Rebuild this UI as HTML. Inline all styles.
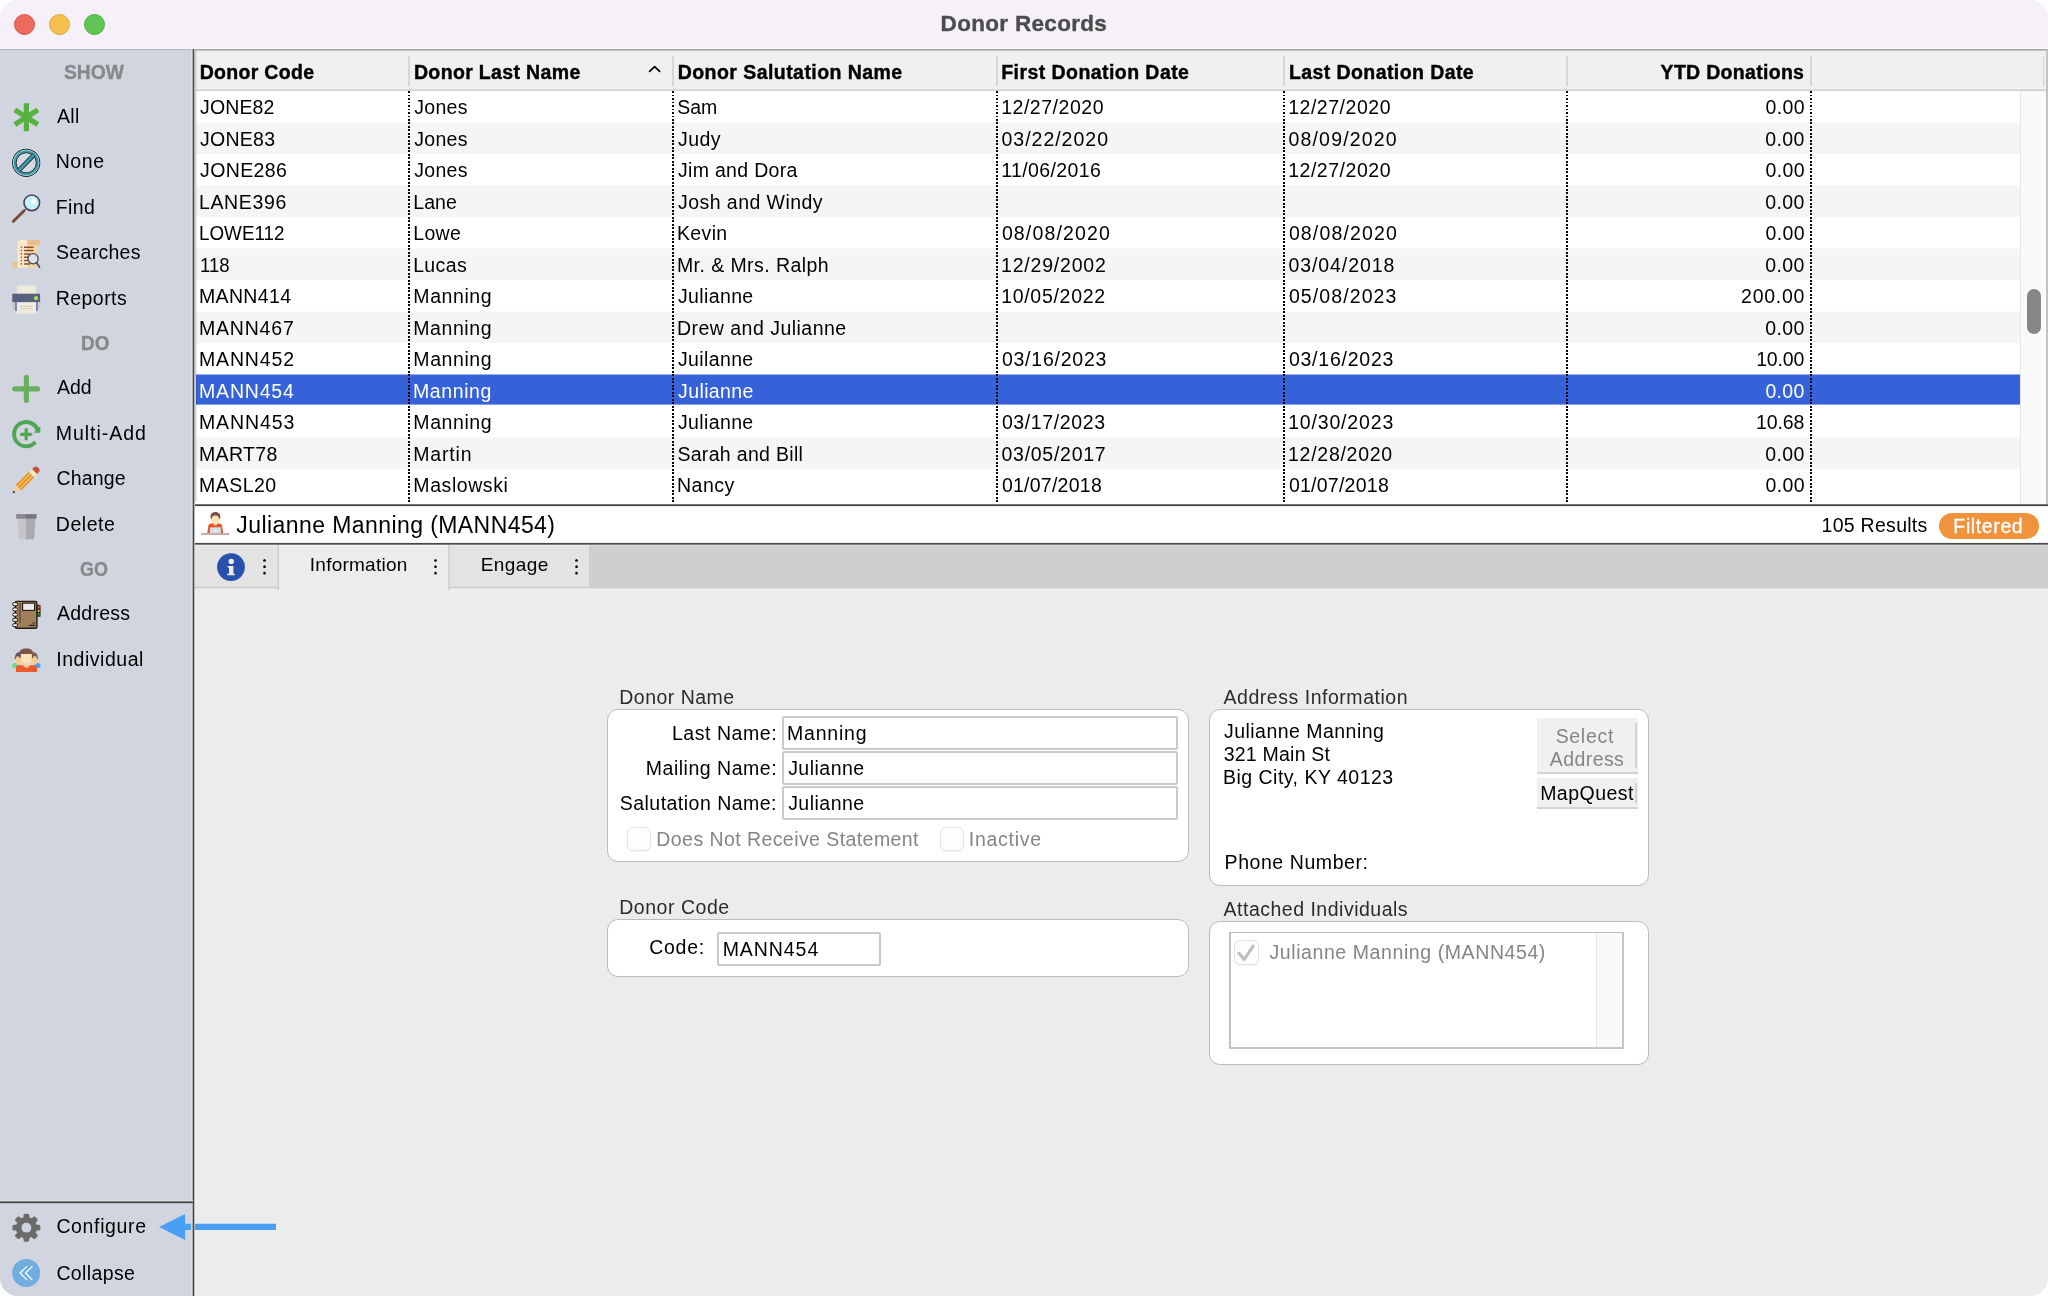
<!DOCTYPE html>
<html lang="en">
<head>
<meta charset="utf-8">
<title>Donor Records</title>
<style>
*{box-sizing:border-box;margin:0;padding:0}
html,body{width:2048px;height:1296px;overflow:hidden;background:#fff}
body{font-family:"Liberation Sans",sans-serif;font-size:19.5px;color:#000;position:relative}
#win{position:absolute;left:0;top:0;width:2048px;height:1296px;border-radius:18px;overflow:hidden;background:#ececec;will-change:transform}
.abs{position:absolute;white-space:nowrap}
/* title bar */
#tbar{position:absolute;left:0;top:0;width:2048px;height:49px;background:#f6f1f8}
#tbar .dot{position:absolute;top:14px;width:21px;height:21px;border-radius:50%}
#ttl{position:absolute;left:940px;top:0;height:49px;line-height:47px;white-space:nowrap;font-weight:bold;font-size:22.5px;color:#4c4c4c;letter-spacing:.25px}
#tline{position:absolute;left:195px;top:48px;width:1853px;height:4px;background:linear-gradient(to bottom,#fbf7fc 0px,#fbf7fc 1px,#a6a6a6 1px,#a6a6a6 2px,#c4c4c4 2px,#c4c4c4 3px,#f4f4f4 3px,#f4f4f4 4px)}
#tline2{position:absolute;left:0;top:48px;width:195px;height:3px;background:linear-gradient(to bottom,#fbf7fc 0px,#fbf7fc 1px,#aab0bc 1px,#aab0bc 2px,#c6cbd6 2px,#c6cbd6 3px)}
/* sidebar */
#side{position:absolute;left:0;top:50px;width:193px;height:1246px;background:#d1d5df}
#sdiv{position:absolute;left:191px;top:49px;width:4px;height:1247px;z-index:5;background:linear-gradient(to right,#d9dde6 0,#d9dde6 1px,#a9acb5 1px,#a9acb5 2px,#484846 2px,#484846 3px,#b8b8b8 3px,#b8b8b8 4px)}
#sdiv2{position:absolute;left:195px;top:589px;width:1px;height:707px;background:#f2f2f2}
#tbl:before{content:"";position:absolute;left:0;top:0;width:2px;height:450px;z-index:4;background:linear-gradient(to right,#cdcdcd 0,#cdcdcd 1px,rgba(0,0,0,.07) 1px,rgba(0,0,0,.07) 2px)}
.sh{position:absolute;left:64px;white-space:nowrap;font-weight:bold;color:#888;font-size:19.5px;height:24px;line-height:24px;letter-spacing:.4px}
.si{position:absolute;left:56px;height:26px;line-height:26px;font-size:19.5px;white-space:nowrap;letter-spacing:.45px}
.ic{position:absolute;left:11px;width:30px;height:30px}
#sline{position:absolute;left:0;top:1200px;width:193px;height:4px;z-index:6;background:linear-gradient(to bottom,#dde1ea 0px,#dde1ea 1px,#7a7b7e 1px,#7a7b7e 2px,#484846 2px,#484846 3px,#b9bcc4 3px,#b9bcc4 4px)}
/* table */
#tbl{position:absolute;left:195px;top:51px;width:1853px;height:453px;background:#fff}
#thead{position:absolute;left:0;top:0;width:1851px;height:38px;background:#f0f0f0}
.th{position:absolute;top:0;height:38px;line-height:42px;font-weight:bold;font-size:19.5px;white-space:nowrap;letter-spacing:.3px}
.hs{position:absolute;top:5px;width:2px;height:30px;background:#d6d6d6}
.sort{position:absolute;left:452px;top:14px}
#hline{position:absolute;left:0;top:37px;width:1851px;height:3px;background:linear-gradient(to bottom,#f2f2f2 0px,#f2f2f2 1px,#dcdcdc 1px,#dcdcdc 2px,#d0d0d0 2px,#d0d0d0 3px)}
#rows{position:absolute;left:0;top:40px;width:1825px;height:413px;background:#fff}
#tbl{z-index:2}#tbot{z-index:1}
.bg{position:absolute;left:0;width:1825px}
.row{position:absolute;left:0;width:1825px;height:32px;line-height:32px}
.row.sel{color:#fff}
.td{position:absolute;top:0;white-space:nowrap;font-size:19.5px;letter-spacing:.45px}
.r{text-align:right}
.vs{position:absolute;top:0;width:2px;height:412px;z-index:3;background:repeating-linear-gradient(to bottom,#000 0,#000 1.75px,transparent 1.75px,transparent 3.5px)}
#strack{position:absolute;left:1825px;top:40px;width:26px;height:413px;background:#fafafa;border-left:1px solid #e7e7e7}
#sthumb{position:absolute;left:6px;top:198px;width:14px;height:45px;border-radius:7px;background:#868686}
#tbl:after{content:"";position:absolute;left:1851px;top:0;width:2px;height:453px;background:#c2c2c2}
/* detail */
#dstrip{position:absolute;left:195px;top:506px;width:1853px;height:37px;background:#fff}
#dname{left:41px;top:0;height:37px;line-height:38px;font-size:23px;letter-spacing:.42px}
#dres{right:121px;top:0;height:37px;line-height:39px;font-size:19.5px;letter-spacing:.45px}
#dpill{left:1744px;top:7px;width:100px;height:26px;border-radius:13px;background:#f0933c}
#dpilltxt{left:15px;top:0;height:26px;line-height:26px;color:#fff;font-size:19.5px;letter-spacing:.5px}
#dline{position:absolute;left:195px;top:542px;width:1853px;height:3px;background:linear-gradient(to bottom,#f2f2f2 0px,#f2f2f2 1px,#484848 1px,#484848 2px,#7e7e7e 2px,#7e7e7e 3px)}
#tabs{position:absolute;left:195px;top:545px;width:1853px;height:45px;background:linear-gradient(to bottom,#dbdbdb 0px,#dbdbdb 1px,#cfcfcf 1px,#cfcfcf 2px,#cfcfcf 2px,#cfcfcf 3px,#cfcfcf 3px,#cfcfcf 4px,#cfcfcf 4px,#cfcfcf 5px,#cfcfcf 5px,#cfcfcf 6px,#cfcfcf 6px,#cfcfcf 7px,#cfcfcf 7px,#cfcfcf 8px,#cfcfcf 8px,#cfcfcf 9px,#cfcfcf 9px,#cfcfcf 10px,#cfcfcf 10px,#cfcfcf 11px,#cfcfcf 11px,#cfcfcf 12px,#cfcfcf 12px,#cfcfcf 13px,#cfcfcf 13px,#cfcfcf 14px,#cfcfcf 14px,#cfcfcf 15px,#cfcfcf 15px,#cfcfcf 16px,#cfcfcf 16px,#cfcfcf 17px,#cfcfcf 17px,#cfcfcf 18px,#cfcfcf 18px,#cfcfcf 19px,#cfcfcf 19px,#cfcfcf 20px,#cfcfcf 20px,#cfcfcf 21px,#cfcfcf 21px,#cfcfcf 22px,#cfcfcf 22px,#cfcfcf 23px,#cfcfcf 23px,#cfcfcf 24px,#cfcfcf 24px,#cfcfcf 25px,#cfcfcf 25px,#cfcfcf 26px,#cfcfcf 26px,#cfcfcf 27px,#cfcfcf 27px,#cfcfcf 28px,#cfcfcf 28px,#cfcfcf 29px,#cfcfcf 29px,#cfcfcf 30px,#cfcfcf 30px,#cfcfcf 31px,#cfcfcf 31px,#cfcfcf 32px,#cfcfcf 32px,#cfcfcf 33px,#cfcfcf 33px,#cfcfcf 34px,#cfcfcf 34px,#cfcfcf 35px,#cfcfcf 35px,#cfcfcf 36px,#cfcfcf 36px,#cfcfcf 37px,#cfcfcf 37px,#cfcfcf 38px,#cfcfcf 38px,#cfcfcf 39px,#cfcfcf 39px,#cfcfcf 40px,#cfcfcf 40px,#cfcfcf 41px,#cfcfcf 41px,#cfcfcf 42px,#cdcdcd 42px,#cdcdcd 43px,#dcdcdc 43px,#dcdcdc 44px,#eeeeee 44px,#eeeeee 45px)}
.tab{position:absolute;top:0;height:45px;line-height:39px;font-size:19px;background:linear-gradient(to bottom,#efefef 0px,#efefef 1px,#e3e3e3 1px,#e3e3e3 2px,#e3e3e3 2px,#e3e3e3 3px,#e3e3e3 3px,#e3e3e3 4px,#e3e3e3 4px,#e3e3e3 5px,#e3e3e3 5px,#e3e3e3 6px,#e3e3e3 6px,#e3e3e3 7px,#e3e3e3 7px,#e3e3e3 8px,#e3e3e3 8px,#e3e3e3 9px,#e3e3e3 9px,#e3e3e3 10px,#e3e3e3 10px,#e3e3e3 11px,#e3e3e3 11px,#e3e3e3 12px,#e3e3e3 12px,#e3e3e3 13px,#e3e3e3 13px,#e3e3e3 14px,#e3e3e3 14px,#e3e3e3 15px,#e3e3e3 15px,#e3e3e3 16px,#e3e3e3 16px,#e3e3e3 17px,#e3e3e3 17px,#e3e3e3 18px,#e3e3e3 18px,#e3e3e3 19px,#e3e3e3 19px,#e3e3e3 20px,#e3e3e3 20px,#e3e3e3 21px,#e3e3e3 21px,#e3e3e3 22px,#e3e3e3 22px,#e3e3e3 23px,#e3e3e3 23px,#e3e3e3 24px,#e3e3e3 24px,#e3e3e3 25px,#e3e3e3 25px,#e3e3e3 26px,#e3e3e3 26px,#e3e3e3 27px,#e3e3e3 27px,#e3e3e3 28px,#e3e3e3 28px,#e3e3e3 29px,#e3e3e3 29px,#e3e3e3 30px,#e3e3e3 30px,#e3e3e3 31px,#e3e3e3 31px,#e3e3e3 32px,#e3e3e3 32px,#e3e3e3 33px,#e3e3e3 33px,#e3e3e3 34px,#e3e3e3 34px,#e3e3e3 35px,#e3e3e3 35px,#e3e3e3 36px,#e3e3e3 36px,#e3e3e3 37px,#e3e3e3 37px,#e3e3e3 38px,#e3e3e3 38px,#e3e3e3 39px,#e3e3e3 39px,#e3e3e3 40px,#e3e3e3 40px,#e3e3e3 41px,#dedede 41px,#dedede 42px,#cacaca 42px,#cacaca 43px,#e4e4e4 43px,#e4e4e4 44px,#eeeeee 44px,#eeeeee 45px)}
.tab.act{background:linear-gradient(to bottom,#f4f4f4 0px,#f4f4f4 1px,#ececec 1px,#ececec 2px,#ececec 2px,#ececec 3px,#ececec 3px,#ececec 4px,#ececec 4px,#ececec 5px,#ececec 5px,#ececec 6px,#ececec 6px,#ececec 7px,#ececec 7px,#ececec 8px,#ececec 8px,#ececec 9px,#ececec 9px,#ececec 10px,#ececec 10px,#ececec 11px,#ececec 11px,#ececec 12px,#ececec 12px,#ececec 13px,#ececec 13px,#ececec 14px,#ececec 14px,#ececec 15px,#ececec 15px,#ececec 16px,#ececec 16px,#ececec 17px,#ececec 17px,#ececec 18px,#ececec 18px,#ececec 19px,#ececec 19px,#ececec 20px,#ececec 20px,#ececec 21px,#ececec 21px,#ececec 22px,#ececec 22px,#ececec 23px,#ececec 23px,#ececec 24px,#ececec 24px,#ececec 25px,#ececec 25px,#ececec 26px,#ececec 26px,#ececec 27px,#ececec 27px,#ececec 28px,#ececec 28px,#ececec 29px,#ececec 29px,#ececec 30px,#ececec 30px,#ececec 31px,#ececec 31px,#ececec 32px,#ececec 32px,#ececec 33px,#ececec 33px,#ececec 34px,#ececec 34px,#ececec 35px,#ececec 35px,#ececec 36px,#ececec 36px,#ececec 37px,#ececec 37px,#ececec 38px,#ececec 38px,#ececec 39px,#ececec 39px,#ececec 40px,#ececec 40px,#ececec 41px,#ececec 41px,#ececec 42px,#ececec 42px,#ececec 43px,#ececec 43px,#ececec 44px,#ececec 44px,#ececec 45px)}
.dots{position:absolute;top:14px;width:3px;height:16px;margin-left:-.3px;background:radial-gradient(circle at 1.5px 1.5px,#000 .95px,transparent 1.6px) 0 0/3px 6.35px repeat-y}
.glabel{position:absolute;height:24px;line-height:24px;font-size:19.5px;color:#2b2b2b;white-space:nowrap;letter-spacing:.4px}
.gbox{position:absolute;background:#fff;border:1px solid #bcbcbc;border-radius:11px}
.lab{position:absolute;white-space:nowrap;height:24px;line-height:24px;font-size:19.5px;letter-spacing:.45px}
.ft{left:3px;top:0;height:30px;line-height:30px}
.fld{position:absolute;height:34px;line-height:33px;background:#fff;border:2px solid #c9c9c9;border-radius:2px;font-size:19.5px;letter-spacing:.45px;white-space:nowrap}
.cb{position:absolute;width:24px;height:24px;border:1px solid #e3e3e3;border-radius:6px;background:#fdfdfd;box-shadow:0 .5px 1px rgba(0,0,0,.05)}
.dis{position:absolute;white-space:nowrap;height:24px;line-height:24px;color:#858585;font-size:19.5px;letter-spacing:.5px}
.addr{font-size:19.5px;height:23px;line-height:23px;letter-spacing:.38px}
.btn{position:absolute;width:101px;background:#f0f0f0;border-bottom:2px solid #d3d3d3;font-size:19.5px;line-height:23px;letter-spacing:.45px}
.btn.off{color:#858585}
.btn:after{content:"";position:absolute;right:1px;top:5px;bottom:4px;width:2px;background:#d3d3d3}
#alist{position:absolute;left:19px;top:10px;width:395px;height:117px;background:#fff;border:1px solid #bcbcbc;border-left:2px solid #bfbfbf;border-bottom:2px solid #c6c6c6;border-right:2px solid #c6c6c6}
#atrack{position:absolute;right:0;top:0;width:26px;height:114px;background:#fafafa;border-left:1px solid #e6e6e6}
#tbot{position:absolute;left:195px;top:501px;width:1853px;height:6px;background:linear-gradient(to bottom,#f6f7f7 0px,#f6f7f7 1px,#e6e7e7 1px,#e6e7e7 2px,#c6c6c6 2px,#c6c6c6 3px,#767676 3px,#767676 4px,#424242 4px,#424242 5px,#ececec 5px,#ececec 6px)}
/*FIT*/
#h0{letter-spacing:0.298px;margin-left:-0.29px}
#h1{letter-spacing:0.347px;margin-left:-0.07px}
#h2{letter-spacing:0.444px;margin-left:-0.29px}
#h3{letter-spacing:0.440px;margin-left:-0.82px}
#h4{letter-spacing:0.413px;margin-left:-0.07px}
#h5{letter-spacing:0.303px;margin-right:-0.28px}
#r0c0{letter-spacing:0.144px;margin-left:-0.02px}
#r1c0{letter-spacing:0.274px;margin-left:-0.02px}
#r2c0{letter-spacing:0.405px;margin-left:-0.02px}
#r3c0{letter-spacing:0.659px;margin-left:-1.09px}
#r4c0{letter-spacing:0;transform-origin:0 50%;transform:scaleX(0.9653);margin-left:-1.00px}
#r5c0{letter-spacing:0;transform-origin:0 50%;transform:scaleX(0.9544);margin-left:0.00px}
#r6c0{letter-spacing:0.353px;margin-left:-1.09px}
#r7c0{letter-spacing:0.815px;margin-left:-1.09px}
#r8c0{letter-spacing:0.864px;margin-left:-1.09px}
#r9c0{letter-spacing:0.810px;margin-left:-0.94px}
#r10c0{letter-spacing:0.914px;margin-left:-1.09px}
#r11c0{letter-spacing:0.364px;margin-left:-1.09px}
#r12c0{letter-spacing:0.494px;margin-left:-1.09px}
#r0c1{letter-spacing:0.298px;margin-left:0.24px}
#r1c1{letter-spacing:0.311px;margin-left:0.22px}
#r2c1{letter-spacing:0.298px;margin-left:0.24px}
#r3c1{letter-spacing:0.140px;margin-left:-0.86px}
#r4c1{letter-spacing:0.280px;margin-left:-0.68px}
#r5c1{letter-spacing:0.386px;margin-left:-0.86px}
#r6c1{letter-spacing:0.577px;margin-left:-0.68px}
#r7c1{letter-spacing:0.603px;margin-left:-0.86px}
#r8c1{letter-spacing:0.577px;margin-left:-0.68px}
#r9c1{letter-spacing:0.595px;margin-left:-0.99px}
#r10c1{letter-spacing:0.577px;margin-left:-0.68px}
#r11c1{letter-spacing:0.864px;margin-left:-0.86px}
#r12c1{letter-spacing:0.574px;margin-left:-0.68px}
#r0c2{letter-spacing:-0.001px;margin-left:-0.78px}
#r1c2{letter-spacing:0.463px;margin-left:-0.02px}
#r2c2{letter-spacing:0.310px;margin-left:-0.02px}
#r3c2{letter-spacing:0.448px;margin-left:-0.02px}
#r4c2{letter-spacing:0.370px;margin-left:-1.09px}
#r5c2{letter-spacing:0.433px;margin-left:-1.09px}
#r6c2{letter-spacing:0.368px;margin-left:-0.02px}
#r7c2{letter-spacing:0.483px;margin-left:-1.09px}
#r8c2{letter-spacing:0.368px;margin-left:-0.02px}
#r9c2{letter-spacing:0.371px;margin-left:0.11px}
#r10c2{letter-spacing:0.368px;margin-left:-0.02px}
#r11c2{letter-spacing:0.320px;margin-left:-0.64px}
#r12c2{letter-spacing:0.516px;margin-left:-1.09px}
#r0c3{letter-spacing:0.537px;margin-left:-0.87px}
#r1c3{letter-spacing:0.990px;margin-left:-0.54px}
#r2c3{letter-spacing:0.385px;margin-left:-0.87px}
#r4c3{letter-spacing:1.143px;margin-left:-0.13px}
#r5c3{letter-spacing:0.797px;margin-left:-1.00px}
#r6c3{letter-spacing:0.708px;margin-left:-0.87px}
#r8c3{letter-spacing:0.768px;margin-left:-0.13px}
#r10c3{letter-spacing:0.613px;margin-left:-0.13px}
#r11c3{letter-spacing:0.738px;margin-left:-0.54px}
#r12c3{letter-spacing:0.251px;margin-left:-0.13px}
#r0c4{letter-spacing:0.537px;margin-left:-0.87px}
#r1c4{letter-spacing:1.181px;margin-left:-0.54px}
#r2c4{letter-spacing:0.537px;margin-left:-0.87px}
#r4c4{letter-spacing:1.143px;margin-left:-0.13px}
#r5c4{letter-spacing:0.909px;margin-left:-0.54px}
#r6c4{letter-spacing:1.099px;margin-left:-0.13px}
#r8c4{letter-spacing:0.768px;margin-left:-0.13px}
#r10c4{letter-spacing:0.836px;margin-left:-0.87px}
#r11c4{letter-spacing:0.731px;margin-left:-1.00px}
#r12c4{letter-spacing:0.251px;margin-left:-0.13px}
#r0c5{letter-spacing:0.366px;margin-right:-0.86px}
#r1c5{letter-spacing:0.388px;margin-right:-0.82px}
#r2c5{letter-spacing:0.366px;margin-right:-0.86px}
#r3c5{letter-spacing:0.388px;margin-right:-0.82px}
#r4c5{letter-spacing:0.366px;margin-right:-0.86px}
#r5c5{letter-spacing:0.388px;margin-right:-0.82px}
#r6c5{letter-spacing:0.745px;margin-right:-1.20px}
#r7c5{letter-spacing:0.388px;margin-right:-0.82px}
#r8c5{letter-spacing:-0.128px;margin-right:-0.30px}
#r9c5{letter-spacing:0.329px;margin-right:-0.72px}
#r10c5{letter-spacing:-0.071px;margin-right:-0.42px}
#r11c5{letter-spacing:0.388px;margin-right:-0.82px}
#r12c5{letter-spacing:0.366px;margin-right:-0.86px}
#s_show{letter-spacing:0;transform-origin:0 50%;transform:scaleX(0.9894);margin-left:0.00px}
#s_all{letter-spacing:0.266px;margin-left:1.02px}
#s_none{letter-spacing:0.540px;margin-left:-0.27px}
#s_find{letter-spacing:0.360px;margin-left:-0.27px}
#s_searches{letter-spacing:0.298px;margin-left:0.05px}
#s_reports{letter-spacing:0.444px;margin-left:-0.27px}
#s_do{letter-spacing:0;transform-origin:0 50%;transform:scaleX(0.9693);margin-left:17.00px}
#s_add{letter-spacing:-0.001px;margin-left:1.02px}
#s_multiadd{letter-spacing:0.980px;margin-left:-0.27px}
#s_change{letter-spacing:0.184px;margin-left:0.42px}
#s_delete{letter-spacing:0.570px;margin-left:-0.27px}
#s_go{letter-spacing:0;transform-origin:0 50%;transform:scaleX(0.9201);margin-left:16.00px}
#s_address{letter-spacing:0.230px;margin-left:1.02px}
#s_individual{letter-spacing:0.526px;margin-left:0.30px}
#s_configure{letter-spacing:0.634px;margin-left:0.42px}
#s_collapse{letter-spacing:0.373px;margin-left:0.42px}
#ttl{letter-spacing:0.313px;margin-left:0.62px}
#dname{letter-spacing:0.421px;margin-left:0.37px}
#dres{letter-spacing:0.281px;margin-right:-0.62px}
#dpilltxt{letter-spacing:0.622px;margin-left:-0.66px}
#t_info{letter-spacing:0.242px;margin-left:-1.21px}
#t_engage{letter-spacing:0.421px;margin-left:-2.30px}
#g_name{letter-spacing:0.485px;margin-left:-0.77px}
#g_code{letter-spacing:0.528px;margin-left:-0.77px}
#g_addr{letter-spacing:0.526px;margin-left:1.55px}
#g_att{letter-spacing:0.502px;margin-left:1.55px}
#l_last{letter-spacing:0.554px;margin-right:-1.15px}
#l_mail{letter-spacing:0.520px;margin-right:-1.15px}
#l_sal{letter-spacing:0.486px;margin-right:-1.02px}
#l_code{letter-spacing:0.724px;margin-right:-0.88px}
#f_mail{letter-spacing:0.480px;margin-left:1.14px}
#f_sal{letter-spacing:0.480px;margin-left:1.14px}
#f_code{letter-spacing:0.941px;margin-left:0.65px}
#d_stmt{letter-spacing:0.431px;margin-left:-0.70px}
#d_inact{letter-spacing:0.732px;margin-left:-1.26px}
#d_list{letter-spacing:0.588px;margin-left:-1.57px}
#a1{letter-spacing:0.469px;margin-left:-0.02px}
#a2{letter-spacing:0.225px;margin-left:-0.30px}
#a3{letter-spacing:0.495px;margin-left:-1.09px}
#b_sel1{letter-spacing:0.696px;margin-left:-1.38px}
#b_sel2{letter-spacing:0.420px;margin-left:-0.23px}
#b_map{letter-spacing:0.486px;margin-left:-0.89px}
#l_phone{letter-spacing:0.567px;margin-left:-1.45px}
#f_last{letter-spacing:0.777px;margin-left:0.05px}
/*ENDFIT*/
.th{-webkit-text-stroke:.4px #000}
#ttl{-webkit-text-stroke:.35px #4c4c4c}
.sh{-webkit-text-stroke:.3px #888}
#dpilltxt{-webkit-text-stroke:.3px #fff}
</style>
</head>
<body>
<div id="win">

<!-- TITLE BAR -->
<div id="tbar">
  <div class="dot" style="left:14px;background:#ec6a5e;border:1px solid #d5564a"></div>
  <div class="dot" style="left:49px;background:#f5bf4f;border:1px solid #dba63b"></div>
  <div class="dot" style="left:84px;background:#61c554;border:1px solid #4eab43"></div>
  <div id="ttl">Donor Records</div>
</div>
<div id="tline"></div><div id="tline2"></div>

<!-- SIDEBAR -->
<div id="side">
  <div class="sh" id="s_show" style="top:10px">SHOW</div>
  <div class="si" id="s_all" style="top:53px">All</div>
  <div class="si" id="s_none" style="top:98px">None</div>
  <div class="si" id="s_find" style="top:144px">Find</div>
  <div class="si" id="s_searches" style="top:189px">Searches</div>
  <div class="si" id="s_reports" style="top:235px">Reports</div>
  <div class="sh" id="s_do" style="top:281px">DO</div>
  <div class="si" id="s_add" style="top:324px">Add</div>
  <div class="si" id="s_multiadd" style="top:370px">Multi-Add</div>
  <div class="si" id="s_change" style="top:415px">Change</div>
  <div class="si" id="s_delete" style="top:461px">Delete</div>
  <div class="sh" id="s_go" style="top:507px">GO</div>
  <div class="si" id="s_address" style="top:550px">Address</div>
  <div class="si" id="s_individual" style="top:596px">Individual</div>
  <div class="si" id="s_configure" style="top:1163px">Configure</div>
  <div class="si" id="s_collapse" style="top:1210px">Collapse</div>
  <!--ICONS-->
<svg id="icons" width="60" height="1246" viewBox="0 50 60 1246" style="position:absolute;left:0;top:0">
  <!-- All: asterisk -->
  <g stroke="#56b140" stroke-width="5.2" stroke-linecap="butt">
    <line x1="26.4" y1="103.2" x2="26.4" y2="131.2"/>
    <line x1="14.9" y1="109.9" x2="37.9" y2="124.5"/>
    <line x1="37.9" y1="109.9" x2="14.9" y2="124.5"/>
  </g>
  <!-- None: circle slash -->
  <clipPath id="ncl"><circle cx="26.2" cy="162.8" r="11.2"/></clipPath>
  <g fill="none">
    <circle cx="26.2" cy="162.8" r="14.6" stroke="#e6e9f0" stroke-width="1" opacity=".6"/>
    <circle cx="26.2" cy="162.8" r="9.8" fill="#d5d9e3" stroke="none"/>
    <circle cx="26.2" cy="162.8" r="13.6" stroke="#1c2a2e" stroke-width="1.1"/>
    <circle cx="26.2" cy="162.8" r="12.6" stroke="#8fdbe6" stroke-width="1.1"/>
    <circle cx="26.2" cy="162.8" r="11.4" stroke="#3d98aa" stroke-width="2"/>
    <circle cx="26.2" cy="162.8" r="10.1" stroke="#1c2a2e" stroke-width="1"/>
    <g clip-path="url(#ncl)">
      <line x1="17.2" y1="172" x2="35.2" y2="153.6" stroke="#1c2a2e" stroke-width="4.6"/>
      <line x1="17.2" y1="172" x2="35.2" y2="153.6" stroke="#3d98aa" stroke-width="2.9"/>
    </g>
  </g>
  <!-- Find: magnifier -->
  <line x1="25.6" y1="209.2" x2="23.3" y2="211.5" stroke="#4b4359" stroke-width="1.6"/><line x1="23.6" y1="211.2" x2="13.4" y2="221.2" stroke="#7b4a3c" stroke-width="3" stroke-linecap="round"/>
  <circle cx="31.8" cy="202.8" r="7.8" fill="#c6f1fb" stroke="#4b4359" stroke-width="1.6"/>
  <ellipse cx="33.6" cy="201.4" rx="2.5" ry="2.2" fill="#fff"/>
  <!-- Searches: scroll + magnifier -->
  <path d="M12.4 261.4 h6 v6.4 h-3.4 a2.6 2.6 0 0 1 -2.6 -2.6z" fill="#e6c491"/>
  <path d="M17.5 243 a3 3 0 0 1 3 -3 h16.9 v27.8 h-19.9z" fill="#fbe8ca"/>
  <path d="M27 240 h10.4 v27.8 h-10.4z" fill="#f1d3a6"/>
  <path d="M27.5 240 h10.5 a2.4 2.4 0 0 1 2.4 2.4 v2.5 h-12.9z" fill="#e3c08e"/>
  <g stroke="#8c4e36" stroke-width="1.5">
    <path d="M24 247.2h9.6M24 250.6h9.6M24 253.9h6M24 257.2h4M24 260.6h4M24 263.9h6"/>
  </g>
  <g fill="#8c4e36"><circle cx="21.4" cy="247.2" r=".8"/><circle cx="21.4" cy="250.6" r=".8"/><circle cx="21.4" cy="253.9" r=".8"/><circle cx="21.4" cy="257.2" r=".8"/><circle cx="21.4" cy="260.6" r=".8"/><circle cx="21.4" cy="263.9" r=".8"/></g>
  <line x1="36.8" y1="263" x2="39.6" y2="267.2" stroke="#4d4d52" stroke-width="1.6" stroke-linecap="round"/>
  <circle cx="33.1" cy="258.7" r="5.1" fill="#dde1f2" stroke="#4d4d52" stroke-width="1.3"/>
  <!-- Reports: printer -->
  <rect x="16.9" y="285.6" width="19.1" height="9" fill="#eeebdc"/>
  <rect x="12.4" y="302" width="2.7" height="7" fill="#c9c9c4"/><rect x="37.6" y="302" width="2.5" height="7" fill="#c9c9c4"/>
  <rect x="15" y="302" width="2" height="9" fill="#7781b5"/><rect x="36" y="302" width="1.8" height="9" fill="#7781b5"/>
  <rect x="16.9" y="302" width="19.1" height="11.7" fill="#eeebdc"/>
  <rect x="12.2" y="293.7" width="27.9" height="8.4" fill="#57607f"/>
  <circle cx="36" cy="298.2" r="2.1" fill="#9be25c"/>
  <path d="M20.2 306.4h12.2M20.2 308.7h12.2" stroke="#d4cfb2" stroke-width="1"/>
  <!-- Add: plus -->
  <g stroke="#68b05f" stroke-width="5.2" stroke-linecap="round">
    <line x1="26.4" y1="377.4" x2="26.4" y2="400.3"/><line x1="14.8" y1="388.8" x2="37.6" y2="388.8"/>
  </g>
  <!-- Multi-Add -->
  <path d="M37.9 431.1 A12.1 12.1 0 1 0 35.4 442" fill="none" stroke="#4fa553" stroke-width="3.9"/>
  <path d="M40.3 426 V432.8 H33.6z" fill="#4fa553"/>
  <g stroke="#4fa553" stroke-width="3.2" stroke-linecap="round"><line x1="21.6" y1="434.4" x2="30.8" y2="434.4"/><line x1="26.2" y1="429.5" x2="26.2" y2="439"/></g>
  <!-- Change: pencil (drawn horizontally then rotated) -->
  <g transform="translate(12.4 493.5) rotate(-44.7)">
    <path d="M0 0 L8.5 -3.9 V3.9z" fill="#f7cfa8"/>
    <path d="M0 0 L3 -1.3 V1.3z" fill="#2f3640"/>
    <rect x="8.5" y="-3.9" width="18.5" height="7.8" fill="#e8922e"/>
    <rect x="8.5" y="-2" width="18.5" height="1" fill="#f2d264"/>
    <rect x="8.5" y="1.1" width="18.5" height="1" fill="#f2d264"/>
    <rect x="27" y="-3.8" width="4.2" height="7.6" fill="#e6e9dc"/>
    <rect x="28" y="-3.8" width=".9" height="7.6" fill="#f1e6a0"/><rect x="29.7" y="-3.8" width=".9" height="7.6" fill="#f1e6a0"/>
    <path d="M31.2 -3.6 h1.8 a3.6 3.6 0 0 1 0 7.2 h-1.8z" fill="#c9503f"/>
  </g>
  <!-- Delete: trash -->
  <rect x="22.5" y="511.8" width="7.6" height="2.4" fill="#d9dadb"/>
  <path d="M17.6 518.4 H26 V539.2 H18.9z" fill="#c5c5c9"/>
  <path d="M26 518.4 H35.4 L34 539.2 H26z" fill="#a9a9af"/>
  <rect x="16.2" y="514.1" width="9.8" height="4.6" fill="#87878f"/>
  <rect x="26" y="514.1" width="10.5" height="4.6" fill="#75757f"/>
  <!-- Address book -->
  <g stroke="#261c12" stroke-width="1">
    <rect x="37" y="605.4" width="3" height="3.8" fill="#e8622a"/><rect x="37" y="609.2" width="3" height="3.4" fill="#f2c94c"/><rect x="37" y="612.6" width="3" height="3.6" fill="#3fa24a"/>
  </g>
  <rect x="15.3" y="601.4" width="21.6" height="26.8" rx="1.5" fill="#a17f58" stroke="#261c12" stroke-width="1.4"/>
  <line x1="20" y1="603" x2="20" y2="623" stroke="#5b432b" stroke-width="1.2"/>
  <rect x="22.6" y="603.2" width="12" height="7.2" fill="#eaecef" stroke="#261c12" stroke-width="1.1"/>
  <path d="M32.4 623h2.8M29.2 625.4h6" stroke="#2e2318" stroke-width="1.2"/>
  <g fill="#fff" stroke="#261c12" stroke-width="1">
    <rect x="12.6" y="602.7" width="5" height="3" rx="1.5"/><rect x="12.6" y="607.9" width="5" height="3" rx="1.5"/><rect x="12.6" y="613.1" width="5" height="3" rx="1.5"/><rect x="12.6" y="618.3" width="5" height="3" rx="1.5"/><rect x="12.6" y="623.7" width="5" height="3" rx="1.5"/>
  </g>
  <!-- Individual: people -->
  <ellipse cx="15.2" cy="665.5" rx="3.3" ry="2.6" fill="#62df8f"/>
  <ellipse cx="37.4" cy="665.5" rx="3.2" ry="2.6" fill="#45a4f7"/>
  <path d="M14.6 659 a4.2 6.6 0 0 1 6.6 -5.6 v6z" fill="#5b5470"/>
  <path d="M38.2 659 a4.2 6.6 0 0 0 -6.6 -5.6 v6z" fill="#7c6068"/>
  <rect x="15.8" y="656.2" width="5.4" height="8.6" rx="2.4" fill="#f8cd95"/>
  <rect x="31.6" y="656.2" width="5.4" height="8.6" rx="2.4" fill="#f8cd95"/>
  <path d="M15.9 672 v-3.8 a3 3 0 0 1 3 -3 h15.1 a3 3 0 0 1 3 3 v3.8 a.6 .6 0 0 1 -.6 .1 h-19.9z" fill="#ea5a2c"/>
  <path d="M23.2 662 h6.5 v2.6 a3.25 3.1 0 0 1 -6.5 0z" fill="#f8cb9a"/>
  <path d="M19.1 658.6 v-4.6 a5.4 5.4 0 0 1 5.4 -5.5 h3.4 a5.4 5.4 0 0 1 5.4 5.5 v4.6 l-1.6 -1 v-3.4 h-11 v3.4z" fill="#7a5548"/>
  <path d="M20.9 654 h10.9 v4.4 a5.45 5.2 0 0 1 -10.9 0z" fill="#fbe3b5"/>
  <!-- Configure: gear -->
  <g fill="#6b6b6b">
    <circle cx="26.4" cy="1227.7" r="10.6"/>
    <g id="tooth"><rect x="23.5" y="1213.7" width="5.8" height="6" rx="1.6"/></g>
    <rect x="23.5" y="1213.7" width="5.8" height="6" rx="1.6" transform="rotate(45 26.4 1227.7)"/>
    <rect x="23.5" y="1213.7" width="5.8" height="6" rx="1.6" transform="rotate(90 26.4 1227.7)"/>
    <rect x="23.5" y="1213.7" width="5.8" height="6" rx="1.6" transform="rotate(135 26.4 1227.7)"/>
    <rect x="23.5" y="1213.7" width="5.8" height="6" rx="1.6" transform="rotate(180 26.4 1227.7)"/>
    <rect x="23.5" y="1213.7" width="5.8" height="6" rx="1.6" transform="rotate(225 26.4 1227.7)"/>
    <rect x="23.5" y="1213.7" width="5.8" height="6" rx="1.6" transform="rotate(270 26.4 1227.7)"/>
    <rect x="23.5" y="1213.7" width="5.8" height="6" rx="1.6" transform="rotate(315 26.4 1227.7)"/>
  </g>
  <circle cx="26.4" cy="1227.7" r="4.9" fill="#d1d5df"/>
  <!-- Collapse -->
  <circle cx="26.2" cy="1273" r="14" fill="#6faede"/>
  <path d="M26.6 1266.6 L20.1 1273 L26.6 1279.6 M32 1266.6 L25.5 1273 L32 1279.6" fill="none" stroke="#fff" stroke-width="1.3" stroke-linecap="round" stroke-linejoin="round"/>
</svg>
<!--/ICONS-->
</div>
<div id="sdiv"></div><div id="sdiv2"></div>
<div id="sline"></div>

<!-- ARROW --><div id="arrow"><svg class="abs" style="left:155px;top:1210px" width="125" height="34" viewBox="155 1210 125 34"><path d="M159 1227 L185.1 1214.1 V1223.8 H276 V1230 H185.1 V1240.1z" fill="#4a9ff5"/></svg>
</div>
<!-- TABLE -->
<div id="tbl">
 <div id="thead">
  <span class="th" id="h0" style="left:5px">Donor Code</span>
  <span class="th" id="h1" style="left:219px">Donor Last Name</span>
  <span class="th" id="h2" style="left:483px">Donor Salutation Name</span>
  <span class="th" id="h3" style="left:807px">First Donation Date</span>
  <span class="th" id="h4" style="left:1094px">Last Donation Date</span>
  <span class="th r" id="h5" style="right:242px">YTD Donations</span>
  <i class="hs" style="left:213px"></i>
  <i class="hs" style="left:477px"></i>
  <i class="hs" style="left:801px"></i>
  <i class="hs" style="left:1088px"></i>
  <i class="hs" style="left:1371px"></i>
  <i class="hs" style="left:1615px"></i>
  <i class="hs" style="left:1848px;width:1px;background:#d0d0d0"></i>
  <svg class="sort" width="14" height="9" viewBox="0 0 14 9"><path d="M2.6 6.4 L7.6 1.65 L12.6 6.4" fill="none" stroke="#000" stroke-width="1.75" stroke-linecap="round" stroke-linejoin="round"/></svg>
 </div>
 <div id="hline"></div>
 <div id="rows">
  <div class="bg" style="top:31px;height:1px;background:#fafafa"></div>
  <div class="bg" style="top:32px;height:31px;background:#f4f5f5"></div>
  <div class="bg" style="top:94px;height:1px;background:#fafafa"></div>
  <div class="bg" style="top:95px;height:31px;background:#f4f5f5"></div>
  <div class="bg" style="top:157px;height:1px;background:#fafafa"></div>
  <div class="bg" style="top:158px;height:31px;background:#f4f5f5"></div>
  <div class="bg" style="top:220px;height:1px;background:#fafafa"></div>
  <div class="bg" style="top:221px;height:31px;background:#f4f5f5"></div>
  <div class="bg" style="top:283px;height:1px;background:#9ab0ec"></div>
  <div class="bg" style="top:284px;height:29px;background:#3562d8"></div>
  <div class="bg" style="top:313px;height:1px;background:#86a1e8"></div>
  <div class="bg" style="top:346px;height:1px;background:#fafafa"></div>
  <div class="bg" style="top:347px;height:31px;background:#f4f5f5"></div>
  <div class="row" style="top:0px">
   <span class="td" id="r0c0" style="left:5px">JONE82</span>
   <span class="td" id="r0c1" style="left:219px">Jones</span>
   <span class="td" id="r0c2" style="left:483px">Sam</span>
   <span class="td" id="r0c3" style="left:807px">12/27/2020</span>
   <span class="td" id="r0c4" style="left:1094px">12/27/2020</span>
   <span class="td r" id="r0c5" style="right:216px">0.00</span>
  </div>
  <div class="row half" style="top:32px">
   <span class="td" id="r1c0" style="left:5px">JONE83</span>
   <span class="td" id="r1c1" style="left:219px">Jones</span>
   <span class="td" id="r1c2" style="left:483px">Judy</span>
   <span class="td" id="r1c3" style="left:807px">03/22/2020</span>
   <span class="td" id="r1c4" style="left:1094px">08/09/2020</span>
   <span class="td r" id="r1c5" style="right:216px">0.00</span>
  </div>
  <div class="row" style="top:63px">
   <span class="td" id="r2c0" style="left:5px">JONE286</span>
   <span class="td" id="r2c1" style="left:219px">Jones</span>
   <span class="td" id="r2c2" style="left:483px">Jim and Dora</span>
   <span class="td" id="r2c3" style="left:807px">11/06/2016</span>
   <span class="td" id="r2c4" style="left:1094px">12/27/2020</span>
   <span class="td r" id="r2c5" style="right:216px">0.00</span>
  </div>
  <div class="row half" style="top:95px">
   <span class="td" id="r3c0" style="left:5px">LANE396</span>
   <span class="td" id="r3c1" style="left:219px">Lane</span>
   <span class="td" id="r3c2" style="left:483px">Josh and Windy</span>
   <span class="td r" id="r3c5" style="right:216px">0.00</span>
  </div>
  <div class="row" style="top:126px">
   <span class="td" id="r4c0" style="left:5px">LOWE112</span>
   <span class="td" id="r4c1" style="left:219px">Lowe</span>
   <span class="td" id="r4c2" style="left:483px">Kevin</span>
   <span class="td" id="r4c3" style="left:807px">08/08/2020</span>
   <span class="td" id="r4c4" style="left:1094px">08/08/2020</span>
   <span class="td r" id="r4c5" style="right:216px">0.00</span>
  </div>
  <div class="row half" style="top:158px">
   <span class="td" id="r5c0" style="left:5px">118</span>
   <span class="td" id="r5c1" style="left:219px">Lucas</span>
   <span class="td" id="r5c2" style="left:483px">Mr. &amp; Mrs. Ralph</span>
   <span class="td" id="r5c3" style="left:807px">12/29/2002</span>
   <span class="td" id="r5c4" style="left:1094px">03/04/2018</span>
   <span class="td r" id="r5c5" style="right:216px">0.00</span>
  </div>
  <div class="row" style="top:189px">
   <span class="td" id="r6c0" style="left:5px">MANN414</span>
   <span class="td" id="r6c1" style="left:219px">Manning</span>
   <span class="td" id="r6c2" style="left:483px">Julianne</span>
   <span class="td" id="r6c3" style="left:807px">10/05/2022</span>
   <span class="td" id="r6c4" style="left:1094px">05/08/2023</span>
   <span class="td r" id="r6c5" style="right:216px">200.00</span>
  </div>
  <div class="row half" style="top:221px">
   <span class="td" id="r7c0" style="left:5px">MANN467</span>
   <span class="td" id="r7c1" style="left:219px">Manning</span>
   <span class="td" id="r7c2" style="left:483px">Drew and Julianne</span>
   <span class="td r" id="r7c5" style="right:216px">0.00</span>
  </div>
  <div class="row" style="top:252px">
   <span class="td" id="r8c0" style="left:5px">MANN452</span>
   <span class="td" id="r8c1" style="left:219px">Manning</span>
   <span class="td" id="r8c2" style="left:483px">Juilanne</span>
   <span class="td" id="r8c3" style="left:807px">03/16/2023</span>
   <span class="td" id="r8c4" style="left:1094px">03/16/2023</span>
   <span class="td r" id="r8c5" style="right:216px">10.00</span>
  </div>
  <div class="row half sel" style="top:284px">
   <span class="td" id="r9c0" style="left:5px">MANN454</span>
   <span class="td" id="r9c1" style="left:219px">Manning</span>
   <span class="td" id="r9c2" style="left:483px">Julianne</span>
   <span class="td r" id="r9c5" style="right:216px">0.00</span>
  </div>
  <div class="row" style="top:315px">
   <span class="td" id="r10c0" style="left:5px">MANN453</span>
   <span class="td" id="r10c1" style="left:219px">Manning</span>
   <span class="td" id="r10c2" style="left:483px">Julianne</span>
   <span class="td" id="r10c3" style="left:807px">03/17/2023</span>
   <span class="td" id="r10c4" style="left:1094px">10/30/2023</span>
   <span class="td r" id="r10c5" style="right:216px">10.68</span>
  </div>
  <div class="row half" style="top:347px">
   <span class="td" id="r11c0" style="left:5px">MART78</span>
   <span class="td" id="r11c1" style="left:219px">Martin</span>
   <span class="td" id="r11c2" style="left:483px">Sarah and Bill</span>
   <span class="td" id="r11c3" style="left:807px">03/05/2017</span>
   <span class="td" id="r11c4" style="left:1094px">12/28/2020</span>
   <span class="td r" id="r11c5" style="right:216px">0.00</span>
  </div>
  <div class="row" style="top:378px">
   <span class="td" id="r12c0" style="left:5px">MASL20</span>
   <span class="td" id="r12c1" style="left:219px">Maslowski</span>
   <span class="td" id="r12c2" style="left:483px">Nancy</span>
   <span class="td" id="r12c3" style="left:807px">01/07/2018</span>
   <span class="td" id="r12c4" style="left:1094px">01/07/2018</span>
   <span class="td r" id="r12c5" style="right:216px">0.00</span>
  </div>
  <i class="vs" style="left:213px"></i>
  <i class="vs" style="left:477px"></i>
  <i class="vs" style="left:801px"></i>
  <i class="vs" style="left:1088px"></i>
  <i class="vs" style="left:1371px"></i>
  <i class="vs" style="left:1615px"></i>
 </div>
 <div id="strack"><div id="sthumb"></div></div>
</div>
<div id="tbot"></div>

<!-- DETAIL -->
<div id="dstrip">
  <svg class="abs" style="left:4px;top:4px" width="32" height="28" viewBox="199 510 32 28">
    <rect x="201.1" y="533.1" width="28" height="1.8" fill="#c4a19c"/>
    <path d="M207.3 533.1 L208.3 526 a3 3 0 0 1 2.6 -2.6 h8.6 a3 3 0 0 1 2.6 2.6 L223.1 533.1z" fill="#e8512a"/>
    <rect x="213.4" y="521" width="4" height="4.6" rx="1.8" fill="#f8cf98"/>
    <ellipse cx="215.4" cy="516.4" rx="5" ry="4.3" fill="#7b5248"/>
    <rect x="211.8" y="515.4" width="7.1" height="8.4" rx="3.3" fill="#fbe2b0"/>
    <rect x="209.9" y="527.3" width="11" height="5.8" fill="#d5dde8"/>
    <circle cx="215.4" cy="530.4" r=".8" fill="#fff"/>
  </svg>
  <span class="abs" id="dname">Julianne Manning (MANN454)</span>
  <span class="abs" id="dres">105 Results</span>
  <div class="abs" id="dpill"><span class="abs" id="dpilltxt">Filtered</span></div>
</div>
<div id="dline"></div>
<div id="tabs">
  <div class="tab" style="left:0;width:84px;border-right:1px solid #ccc;box-shadow:inset -1px 0 #dadada">
    <svg class="abs" style="left:22px;top:8px" width="28" height="28" viewBox="0 0 28 28"><circle cx="14" cy="14.1" r="13.9" fill="#2850ae"/><circle cx="14.25" cy="8.4" r="2.7" fill="#f0ede6"/><path d="M10.7 13h5.7v7.8h1.4v1.4h-7.6v-1.4h1.8v-6.2h-1.3z" fill="#f0ede6"/></svg>
    <i class="dots" style="left:68px"></i>
  </div>
  <div class="tab act" style="left:84px;width:169px;border-right:1px solid #efefef"><span class="abs" id="t_info" style="left:32px;top:0">Information</span><i class="dots" style="left:155px"></i></div>
  <div class="tab" style="left:253px;width:141px;border-left:2px solid #d3d3d3"><span class="abs" id="t_engage" style="left:33px;top:0">Engage</span><i class="dots" style="left:125px"></i></div>
</div>

<div class="glabel" id="g_name" style="left:620px;top:685px">Donor Name</div>
<div class="gbox" style="left:607px;top:709px;width:582px;height:153px">
  <span class="lab" id="l_last" style="right:412px;top:11px">Last Name:</span>
  <span class="lab" id="l_mail" style="right:412px;top:46px">Mailing Name:</span>
  <span class="lab" id="l_sal" style="right:412px;top:81px">Salutation Name:</span>
  <div class="fld" style="left:174px;top:6px;width:396px"><span class="abs ft" id="f_last">Manning</span></div>
  <div class="fld" style="left:174px;top:41px;width:396px"><span class="abs ft" id="f_mail">Julianne</span></div>
  <div class="fld" style="left:174px;top:76px;width:396px"><span class="abs ft" id="f_sal">Julianne</span></div>
  <i class="cb" style="left:19px;top:117px"></i><span class="dis" id="d_stmt" style="left:49px;top:117px">Does Not Receive Statement</span>
  <i class="cb" style="left:332px;top:117px"></i><span class="dis" id="d_inact" style="left:362px;top:117px">Inactive</span>
</div>

<div class="glabel" id="g_code" style="left:620px;top:895px">Donor Code</div>
<div class="gbox" style="left:607px;top:919px;width:582px;height:58px">
  <span class="lab" id="l_code" style="right:484px;top:15px">Code:</span>
  <div class="fld" style="left:109px;top:12px;width:164px"><span class="abs ft" id="f_code">MANN454</span></div>
</div>

<div class="glabel" id="g_addr" style="left:1222px;top:685px">Address Information</div>
<div class="gbox" style="left:1209px;top:709px;width:440px;height:177px">
  <span class="abs addr" id="a1" style="left:14px;top:10px">Julianne Manning</span>
  <span class="abs addr" id="a2" style="left:14px;top:33px">321 Main St</span>
  <span class="abs addr" id="a3" style="left:14px;top:56px">Big City, KY 40123</span>
  <div class="btn off" style="left:327px;top:8px;height:56px"><span class="abs" id="b_sel1" style="left:20px;top:7px">Select</span><span class="abs" id="b_sel2" style="left:13px;top:30px">Address</span></div>
  <div class="btn" style="left:327px;top:68px;height:31px"><span class="abs" id="b_map" style="left:4px;top:4px">MapQuest</span></div>
  <span class="lab" id="l_phone" style="left:16px;top:140px">Phone Number:</span>
</div>

<div class="glabel" id="g_att" style="left:1222px;top:897px">Attached Individuals</div>
<div class="gbox" style="left:1209px;top:921px;width:440px;height:144px">
  <div id="alist">
    <i class="cb" style="left:3px;top:7px;width:25px;height:25px"><svg width="25" height="25" viewBox="0 0 25 25" style="position:absolute;left:-1px;top:-1px"><path d="M4.9 13.2 L10.3 19.4 L19 6.1" fill="none" stroke="#bebebe" stroke-width="3.1" stroke-linecap="round" stroke-linejoin="round"/></svg></i>
    <span class="dis" id="d_list" style="left:40px;top:7px">Julianne Manning (MANN454)</span>
    <div id="atrack"></div>
  </div>
</div>

</div>
</body>
</html>
